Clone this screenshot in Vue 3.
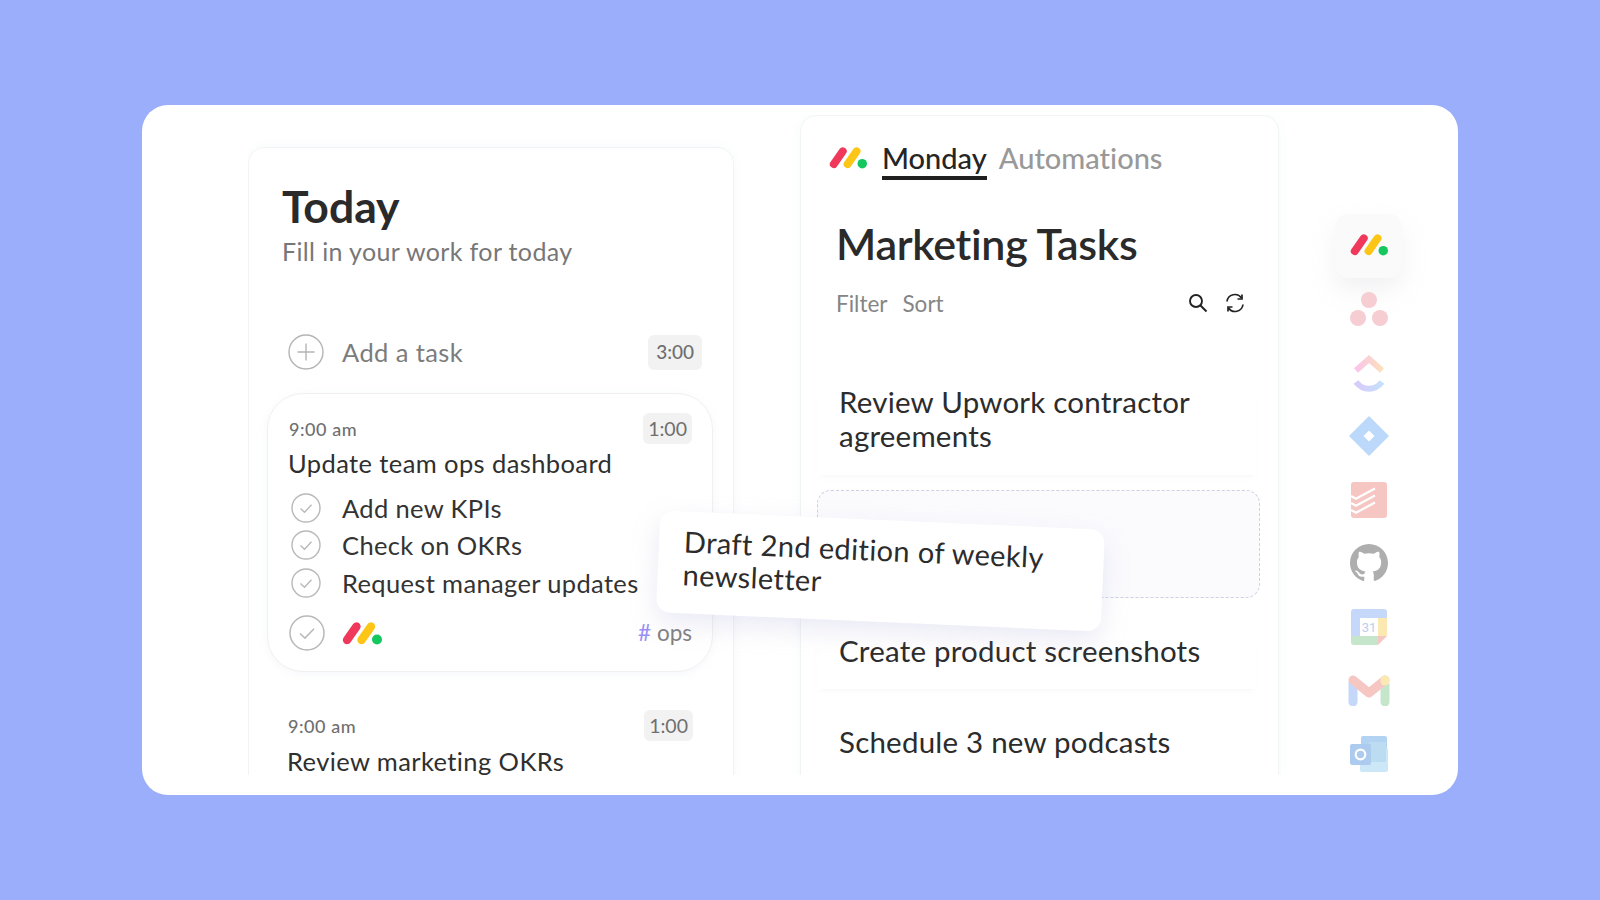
<script setup>
const subtasks = ['Add new KPIs', 'Check on OKRs', 'Request manager updates']
</script>

<template>
  <div class="page">
    <div class="card">
      <div class="stage">
        <section class="today">
          <h1 class="today-title">Today</h1>
          <p class="today-sub">Fill in your work for today</p>
          <div class="add-row">
            <svg class="add-icon" viewBox="0 0 36 36" width="36" height="36" fill="none" stroke="#b4b4b4" stroke-width="1.4">
              <circle cx="18" cy="18" r="17" />
              <path d="M18 9.5v17M9.5 18h17" />
            </svg>
            <span class="add-label">Add a task</span>
            <span class="badge badge-lg">3:00</span>
          </div>
          <article class="item">
            <div class="item-top">
              <span class="time">9:00 am</span>
              <span class="badge">1:00</span>
            </div>
            <div class="item-name">Update team ops dashboard</div>
            <ul class="subs">
              <li v-for="s in subtasks" :key="s" class="sub">
                <svg viewBox="0 0 30 30" width="30" height="30" fill="none" stroke="#b9b9b9" stroke-width="1.4">
                  <circle cx="15" cy="15" r="14" />
                  <path d="M9.5 15.5l4 3.8 7-7.5" />
                </svg>
                <span>{{ s }}</span>
              </li>
            </ul>
            <div class="item-foot">
              <svg viewBox="0 0 36 36" width="36" height="36" fill="none" stroke="#b9b9b9" stroke-width="1.5">
                <circle cx="18" cy="18" r="17" />
                <path d="M11 18.5l5 4.6 9-9.3" />
              </svg>
              <svg class="logo-foot" viewBox="0 0 40 24" width="40" height="24">
                <path d="M5 19L14.500 5.500" stroke="#f0395a" stroke-width="8.300" stroke-linecap="round" />
                <path d="M19.500 19L29 5.500" stroke="#fdc516" stroke-width="8.300" stroke-linecap="round" />
                <circle cx="35" cy="18.500" r="5" fill="#14c85f" />
              </svg>
              <span class="tag"><b>#</b> ops</span>
            </div>
          </article>
          <article class="item item-plain">
            <div class="item-top">
              <span class="time">9:00 am</span>
              <span class="badge">1:00</span>
            </div>
            <div class="item-name">Review marketing OKRs</div>
          </article>
        </section>

        <section class="board">
          <div class="tabs">
            <svg viewBox="0 0 40 24" width="38" height="23">
              <path d="M5 19L14.500 5.500" stroke="#f0395a" stroke-width="8.300" stroke-linecap="round" />
              <path d="M19.500 19L29 5.500" stroke="#fdc516" stroke-width="8.300" stroke-linecap="round" />
              <circle cx="35" cy="18.500" r="5" fill="#14c85f" />
            </svg>
            <span class="tab tab-on">Monday</span>
            <span class="tab">Automations</span>
          </div>
          <h2 class="board-title">Marketing Tasks</h2>
          <div class="tools">
            <span>Filter</span>
            <span>Sort</span>
            <svg class="search" viewBox="0 0 20 20" width="20" height="20" fill="none" stroke="#222" stroke-width="1.900">
              <circle cx="8" cy="8" r="6" />
              <path d="M12.500 12.500L18.500 18.500" />
            </svg>
            <svg viewBox="0 0 20 20" width="20" height="20" fill="none" stroke="#222" stroke-width="1.700">
              <path d="M2 8.500A8 8 0 0 1 16.500 5" />
              <path d="M17 1.500V6h-4.500" />
              <path d="M18 11.500A8 8 0 0 1 3.500 15" />
              <path d="M3 18.500V14h4.500" />
            </svg>
          </div>
          <div class="task task-first">Review Upwork contractor agreements</div>
          <div class="slot"></div>
          <div class="task task-mid">Create product screenshots</div>
          <div class="task task-last">Schedule 3 new podcasts</div>
        </section>

        <aside class="rail">
          <div class="rail-item rail-on">
            <svg viewBox="0 0 40 24" width="38" height="23">
              <path d="M5 19L14.500 5.500" stroke="#f0395a" stroke-width="8.300" stroke-linecap="round" />
              <path d="M19.500 19L29 5.500" stroke="#fdc516" stroke-width="8.300" stroke-linecap="round" />
              <circle cx="35" cy="18.500" r="5" fill="#14c85f" />
            </svg>
          </div>
          <div class="rail-item">
            <svg viewBox="0 0 38 36" width="38" height="36" fill="#f5cdd2">
              <circle cx="19" cy="9" r="8" />
              <circle cx="8" cy="27" r="8" />
              <circle cx="30" cy="27" r="8" />
            </svg>
          </div>
          <div class="rail-item">
            <svg viewBox="0 0 32 40" width="32" height="40" fill="none" stroke-width="6">
              <defs>
                <linearGradient id="cu1" x1="0" x2="1" y1="0" y2="0">
                  <stop offset="0" stop-color="#fbc4ea" />
                  <stop offset="1" stop-color="#fbe0bc" />
                </linearGradient>
                <linearGradient id="cu2" x1="0" x2="1" y1="0" y2="0">
                  <stop offset="0" stop-color="#d8cbfb" />
                  <stop offset="1" stop-color="#c6e0fb" />
                </linearGradient>
              </defs>
              <path d="M3 17.500L16 6l13 11.500" stroke="url(#cu1)" />
              <path d="M3 29c7 9 19 9 26 0" stroke="url(#cu2)" />
            </svg>
          </div>
          <div class="rail-item">
            <svg viewBox="0 0 40 40" width="40" height="40">
              <path d="M20 1L39 20 20 39 1 20z" fill="#bcd8fa" stroke="#bcd8fa" stroke-linejoin="round" stroke-width="1.500" />
              <path d="M20 15.500l4.500 4.500-4.500 4.500-4.500-4.500z" fill="#fff" stroke="#fff" stroke-linejoin="round" stroke-width="1.500" />
            </svg>
          </div>
          <div class="rail-item">
            <svg viewBox="0 0 36 36" width="36" height="36" fill="none">
              <rect width="36" height="36" rx="3" fill="#f6c6c3" />
              <path d="M0 14l5 2.800 19-10.300M0 21l5 2.800 19-10.300M0 28l5 2.800 19-10.300" stroke="#fff" stroke-width="2.200" />
            </svg>
          </div>
          <div class="rail-item">
            <svg viewBox="0 0 16 16" width="38" height="38" fill="#aeaeae">
              <path fill-rule="evenodd" d="M8 0C3.58 0 0 3.58 0 8c0 3.54 2.29 6.53 5.47 7.59.4.07.55-.17.55-.38 0-.19-.01-.82-.01-1.49-2.01.37-2.53-.49-2.69-.94-.09-.23-.48-.94-.82-1.13-.28-.15-.68-.52-.01-.53.63-.01 1.08.58 1.23.82.72 1.21 1.87.87 2.33.66.07-.52.28-.87.51-1.07-1.78-.2-3.64-.89-3.64-3.95 0-.87.31-1.59.82-2.15-.08-.2-.36-1.02.08-2.12 0 0 .67-.21 2.2.82.64-.18 1.32-.27 2-.27.68 0 1.36.09 2 .27 1.53-1.04 2.2-.82 2.2-.82.44 1.1.16 1.92.08 2.12.51.56.82 1.27.82 2.15 0 3.07-1.87 3.75-3.65 3.95.29.25.54.73.54 1.48 0 1.07-.01 1.93-.01 2.2 0 .21.15.46.55.38A8.013 8.013 0 0016 8c0-4.42-3.58-8-8-8z" />
            </svg>
          </div>
          <div class="rail-item">
            <svg viewBox="0 0 36 36" width="36" height="36">
              <path d="M3 0h30a3 3 0 0 1 3 3v6h-9v-0H9v18H0V3a3 3 0 0 1 3-3z" fill="#c6d8f9" />
              <path d="M27 9h9v18h-9z" fill="#fbe8b2" />
              <path d="M0 27h27v9H3a3 3 0 0 1-3-3z" fill="#c6e6cc" />
              <path d="M27 27h9l-9 9z" fill="#f6c6c3" />
              <rect x="9" y="9" width="18" height="18" fill="#fff" />
              <text x="18" y="23" text-anchor="middle" font-family="Roboto, sans-serif" font-size="13" fill="#bccdf0">31</text>
            </svg>
          </div>
          <div class="rail-item">
            <svg viewBox="0 0 42 32" width="42" height="32" fill="none" stroke-width="9" stroke-linecap="round">
              <path d="M5 9v19" stroke="#c6d8f9" />
              <path d="M37 11v17" stroke="#c6e6cc" />
              <path d="M5 6l16 13L37 6" stroke="#f6c6c3" stroke-linejoin="round" />
              <path d="M37 6v1" stroke="#fbe8b2" />
            </svg>
          </div>
          <div class="rail-item">
            <svg viewBox="0 0 38 36" width="38" height="36">
              <rect x="11" y="0" width="26" height="14" rx="2" fill="#b3d3f2" />
              <rect x="10" y="12" width="28" height="24" rx="2" fill="#cbe7f8" />
              <rect x="19" y="6" width="17" height="20" fill="#bbdcf1" />
              <rect x="0" y="8" width="21" height="21" rx="2" fill="#adcbee" />
              <circle cx="10.500" cy="18.500" r="4.800" fill="none" stroke="#fff" stroke-width="2.200" />
            </svg>
          </div>
        </aside>

        <div class="dragged">Draft 2nd edition of weekly newsletter</div>
      </div>
    </div>
  </div>
</template>

<style>
html, body { background: #9baefb; }
</style>

<style scoped>
.page {
  height: 900px;
  box-sizing: border-box;
  padding: 105px 142px;
  background: #9baefb;
  font-family: Lato, "Noto Sans", sans-serif;
  font-variant-ligatures: none;
  color: #2b2b2b;
}
.card {
  height: 690px;
  box-sizing: border-box;
  padding: 10px 0 0 106px;
  background: #fff;
  border-radius: 26px;
  overflow: hidden;
}
.stage {
  position: relative;
  display: flex;
  align-items: flex-start;
  height: 660px;
  overflow: hidden;
}
.today {
  flex: 0 0 486px;
  box-sizing: border-box;
  height: 700px;
  margin-top: 32px;
  padding: 0 0 0 33px;
  border: 1px solid #f1f4f4;
  border-radius: 16px;
  box-shadow: 0 0 10px rgba(225, 235, 240, .3);
}
.today-title {
  margin: 32px 0 0;
  font-size: 44.500px;
  line-height: 52px;
  font-weight: 700;
  color: #2a2a2a;
}
.today-sub {
  margin: 2px 0 0;
  font-size: 25px;
  line-height: 34px;
  letter-spacing: .37px;
  color: #777;
}
.add-row {
  display: flex;
  align-items: center;
  height: 36px;
  margin: 66px 31px 0 6px;
}
.add-label {
  margin-left: 18px;
  font-size: 25.500px;
  letter-spacing: .4px;
  color: #7c7c7c;
}
.badge {
  margin-left: auto;
  padding: 0 5px;
  height: 31px;
  line-height: 31px;
  border-radius: 6px;
  background: #f2f2f2;
  font-size: 19.500px;
  color: #6f6f6f;
}
.badge-lg {
  height: 35px;
  line-height: 33px;
  padding: 0 8px;
  font-weight: 500;
  font-size: 19px;
}
.item {
  box-sizing: border-box;
  width: 446px;
  height: 279px;
  margin: 23px 0 0 -15px;
  padding: 19px 20px 0 21px;
  border: 1px solid #f0f0f0;
  border-radius: 36px;
  box-shadow: 0 2px 8px rgba(230, 232, 240, .35);
}
.item-plain {
  height: 90px;
  margin-top: 37px;
  border: 0;
  box-shadow: none;
  padding-top: 1px;
}
.item-plain .item-name {
  margin-top: 3px;
}
.item-top {
  display: flex;
  align-items: center;
  justify-content: space-between;
  height: 31px;
}
.time {
  font-size: 18px;
  font-weight: 500;
  letter-spacing: .55px;
  color: #6f6f6f;
}
.item-name {
  margin: 2px 0 0 -1px;
  font-size: 25.500px;
  line-height: 34px;
  letter-spacing: .4px;
  color: #2f2f2f;
}
.subs {
  margin: 9px 0 0;
  padding: 0;
  list-style: none;
}
.sub {
  display: flex;
  align-items: center;
  gap: 21px;
  height: 37.500px;
  padding-left: 2px;
  font-size: 25.500px;
  letter-spacing: .35px;
  color: #333;
}
.item-foot {
  display: flex;
  align-items: center;
  height: 36px;
  margin-top: 13px;
}
.logo-foot {
  margin-left: 17px;
}
.tag {
  margin-left: auto;
  font-size: 22.500px;
  color: #808080;
}
.tag b {
  font-weight: 400;
  color: #9a90f5;
}
.board {
  flex: 0 0 479px;
  box-sizing: border-box;
  height: 700px;
  margin-left: 66px;
  border: 1px solid #f1f4f4;
  border-radius: 16px;
  box-shadow: 0 0 10px rgba(225, 235, 240, .3);
}
.tabs {
  display: flex;
  align-items: center;
  height: 43px;
  margin: 20px 0 0 28px;
}
.tabs svg {
  margin: 0 15px 0 0;
}
.tab {
  margin-right: 12px;
  font-size: 29px;
  line-height: 37px;
  font-weight: 500;
  color: #999;
}
.tab-on {
  color: #252525;
  border-bottom: 4px solid #1f1f1f;
  padding-top: 4px;
}
.board-title {
  margin: 39px 0 0 35px;
  font-size: 43px;
  line-height: 52px;
  font-weight: 600;
  letter-spacing: -.3px;
  color: #2a2a2a;
}
.tools {
  display: flex;
  align-items: center;
  gap: 15px;
  height: 30px;
  margin: 18px 33px 0 35px;
  font-size: 22.500px;
  color: #858585;
}
.search {
  margin-left: auto;
  margin-right: 2px;
}
.task {
  width: 440px;
  box-sizing: border-box;
  margin-left: 16px;
  padding: 0 22px;
  font-size: 29.500px;
  line-height: 34px;
  letter-spacing: .22px;
  color: #2c2c2c;
}
.task-first {
  margin-top: 67px;
  padding-bottom: 22px;
  box-shadow: 0 6px 5px -5px rgba(235, 236, 240, .5);
}
.slot {
  box-sizing: border-box;
  width: 443px;
  height: 108px;
  margin: 15px 0 0 16px;
  border: 1.500px dashed #cfcfe4;
  border-radius: 14px;
  background: #fbfbfe;
}
.task-mid {
  margin-top: 36px;
  padding-bottom: 21px;
  box-shadow: 0 6px 5px -5px rgba(235, 236, 240, .5);
}
.task-last {
  margin-top: 36px;
}
.rail {
  display: flex;
  flex-direction: column;
  align-items: center;
  width: 67px;
  margin: 99px 0 0 56px;
}
.rail-item {
  display: flex;
  align-items: center;
  justify-content: center;
  flex: 0 0 63.500px;
  width: 67px;
}
.rail-on {
  box-sizing: border-box;
  padding-bottom: 3px;
  border-radius: 14px;
  background: #fafafa;
  box-shadow: 0 12px 22px rgba(205, 205, 210, .25);
}
.dragged {
  position: absolute;
  left: 410px;
  top: 405px;
  box-sizing: border-box;
  width: 445px;
  height: 102px;
  padding: 13px 50px 0 25px;
  background: #fff;
  border-radius: 14px;
  box-shadow: 0 10px 26px rgba(170, 170, 215, .25);
  transform: rotate(2.500deg);
  font-size: 29px;
  line-height: 33px;
  letter-spacing: .4px;
  color: #2c2c2c;
}
</style>
